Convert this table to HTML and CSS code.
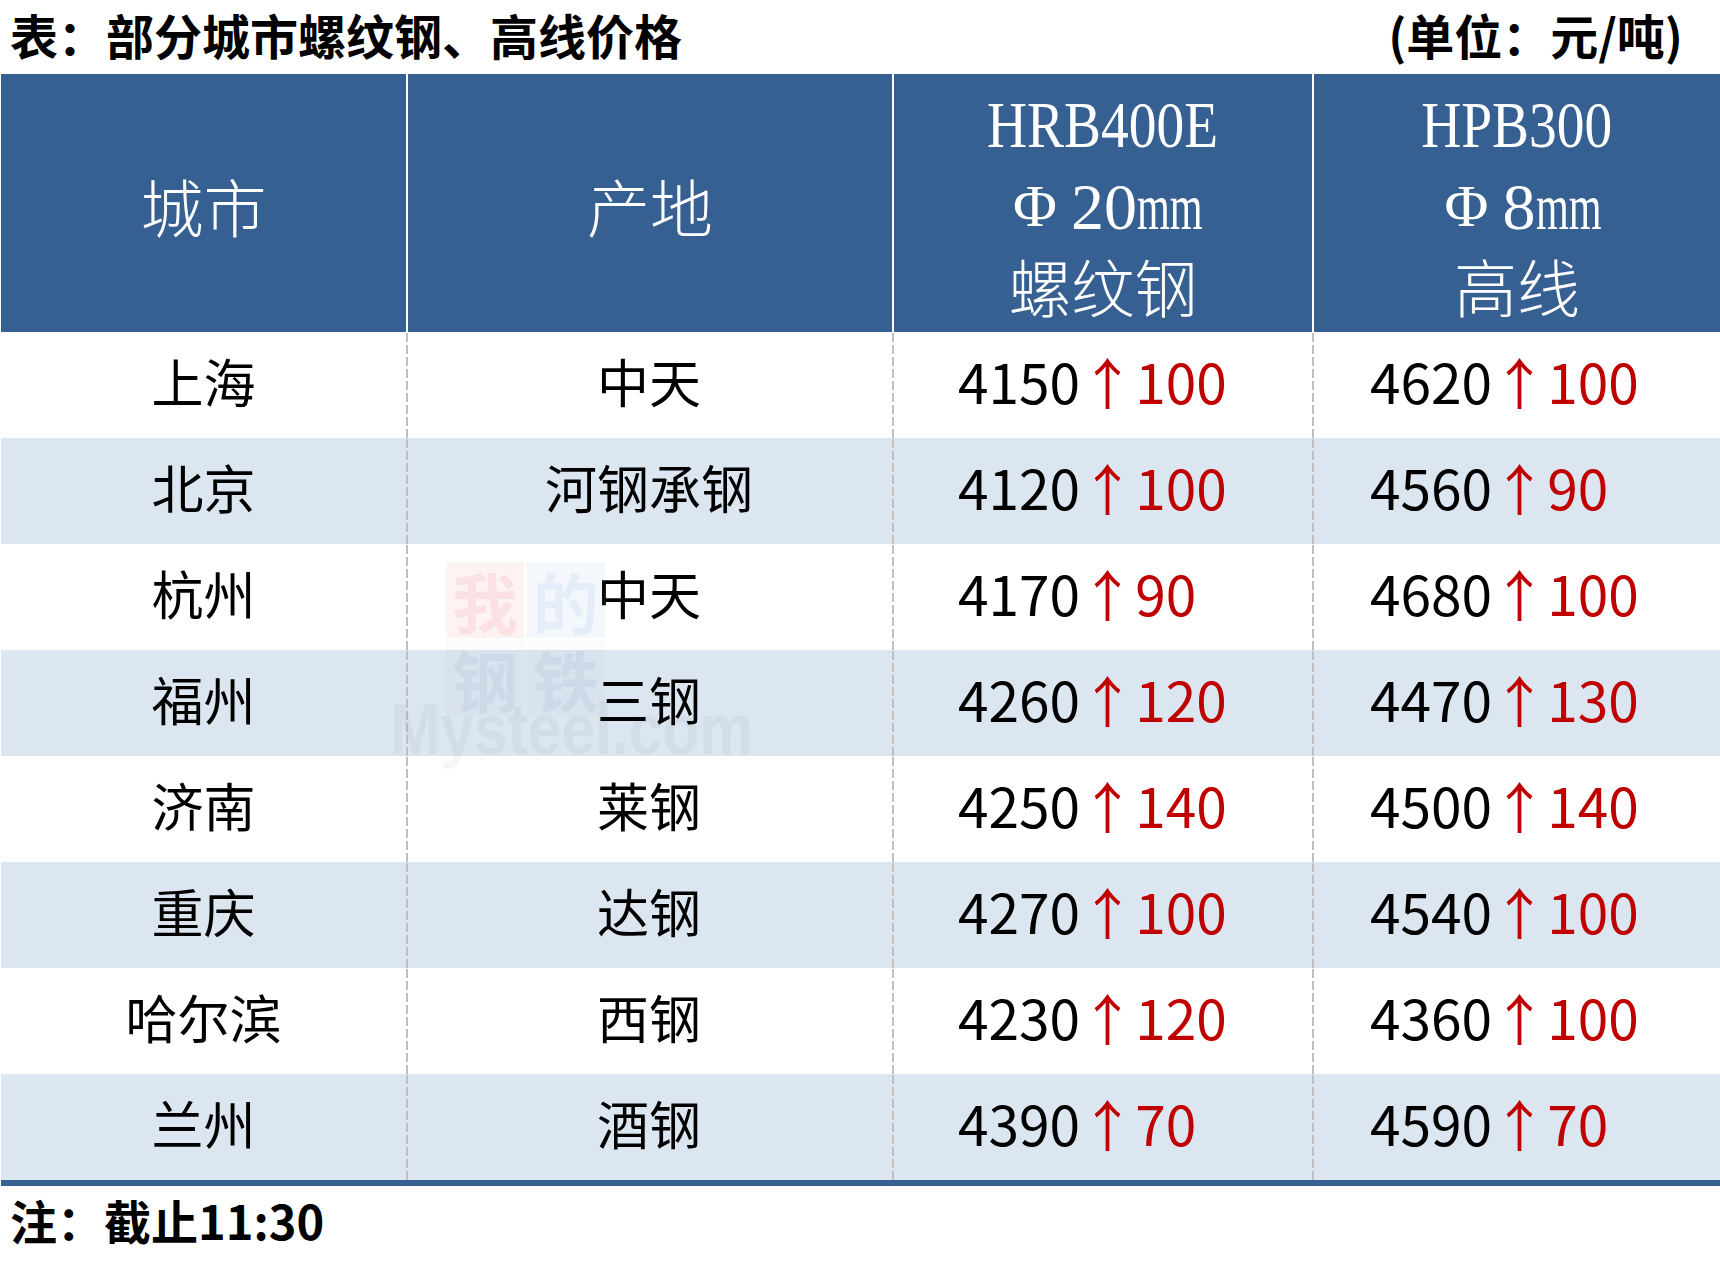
FILE: index.html
```html
<!DOCTYPE html>
<html lang="zh-CN">
<head>
<meta charset="utf-8">
<title>部分城市螺纹钢、高线价格</title>
<link rel="stylesheet" href="styles.css">
</head>
<body>
<div class="page">
  <div class="title">
    <span>表：部分城市螺纹钢、高线价格</span>
    <span>(单位：元/吨)</span>
  </div>
  <div class="table">
    <div class="row head">
      <div class="cell center"><span class="hcjk">城市</span></div>
      <div class="cell center"><span class="hcjk">产地</span></div>
      <div class="cell stack">
        <div class="hl"><span class="lat">HRB400E</span></div>
        <div class="hl spec s3"><span class="phi">Φ</span><span class="dg w2">20</span><span class="mm"><span class="mmi">mm</span></span></div>
        <div class="hl hl3"><span class="hcjk">螺纹钢</span></div>
      </div>
      <div class="cell stack">
        <div class="hl"><span class="lat">HPB300</span></div>
        <div class="hl spec s4"><span class="phi">Φ</span><span class="dg w1">8</span><span class="mm"><span class="mmi">mm</span></span></div>
        <div class="hl hl3"><span class="hcjk">高线</span></div>
      </div>
    </div>

    <div class="row body">
      <div class="cell center">上海</div>
      <div class="cell center">中天</div>
      <div class="cell num n3">4150<span class="up">↑</span><span class="chg">100</span></div>
      <div class="cell num n4">4620<span class="up">↑</span><span class="chg">100</span></div>
    </div>
    <div class="row body alt">
      <div class="cell center">北京</div>
      <div class="cell center">河钢承钢</div>
      <div class="cell num n3">4120<span class="up">↑</span><span class="chg">100</span></div>
      <div class="cell num n4">4560<span class="up">↑</span><span class="chg">90</span></div>
    </div>
    <div class="row body">
      <div class="cell center">杭州</div>
      <div class="cell center">中天</div>
      <div class="cell num n3">4170<span class="up">↑</span><span class="chg">90</span></div>
      <div class="cell num n4">4680<span class="up">↑</span><span class="chg">100</span></div>
    </div>
    <div class="row body alt">
      <div class="cell center">福州</div>
      <div class="cell center">三钢</div>
      <div class="cell num n3">4260<span class="up">↑</span><span class="chg">120</span></div>
      <div class="cell num n4">4470<span class="up">↑</span><span class="chg">130</span></div>
    </div>
    <div class="row body">
      <div class="cell center">济南</div>
      <div class="cell center">莱钢</div>
      <div class="cell num n3">4250<span class="up">↑</span><span class="chg">140</span></div>
      <div class="cell num n4">4500<span class="up">↑</span><span class="chg">140</span></div>
    </div>
    <div class="row body alt">
      <div class="cell center">重庆</div>
      <div class="cell center">达钢</div>
      <div class="cell num n3">4270<span class="up">↑</span><span class="chg">100</span></div>
      <div class="cell num n4">4540<span class="up">↑</span><span class="chg">100</span></div>
    </div>
    <div class="row body">
      <div class="cell center">哈尔滨</div>
      <div class="cell center">西钢</div>
      <div class="cell num n3">4230<span class="up">↑</span><span class="chg">120</span></div>
      <div class="cell num n4">4360<span class="up">↑</span><span class="chg">100</span></div>
    </div>
    <div class="row body alt">
      <div class="cell center">兰州</div>
      <div class="cell center">酒钢</div>
      <div class="cell num n3">4390<span class="up">↑</span><span class="chg">70</span></div>
      <div class="cell num n4">4590<span class="up">↑</span><span class="chg">70</span></div>
    </div>
  </div>
  <div class="note">注：截止11:30</div>

  <div class="watermark" aria-hidden="true">
    <div class="wm-row"><span class="wm-box wm-red">我</span><span class="wm-box wm-blue">的</span></div>
    <div class="wm-row"><span class="wm-box wm-grey">钢</span><span class="wm-box wm-grey">铁</span></div>
    <div class="wm-en"><span class="wm-en-in">Mysteel.com</span></div>
  </div>
</div>
</body>
</html>
```

FILE: styles.css
```css
* { box-sizing: border-box; }

html, body {
  margin: 0;
  padding: 0;
  background: #ffffff;
}

body {
  font-family: "Noto Sans CJK SC", "Noto Sans", sans-serif;
  color: #000000;
}

.page {
  position: relative;
  width: 1720px;
  height: 1261px;
  overflow: hidden;
}

.title {
  height: 74px;
  display: flex;
  justify-content: space-between;
  align-items: center;
  padding: 0 37px 6px 10px;
  font-size: 48px;
  font-weight: 700;
  line-height: 1;
}

.table {
  margin-left: 1px;
  border-bottom: 6px solid #376092;
}

.row {
  display: grid;
  grid-template-columns: 405px 486px 420px 408px;
  height: 106px;
}

.row.alt {
  background: #dce6f1;
}

.cell {
  display: flex;
  align-items: center;
  height: 100%;
}

.center {
  justify-content: center;
}

/* header */
.head {
  height: 258px;
  background: #376092;
  color: #ffffff;
}

.head .cell + .cell {
  border-left: 2px solid #ffffff;
}

.head .center {
  padding-top: 2px;
}

.hcjk {
  font-family: "Noto Sans CJK SC", sans-serif;
  font-weight: 300;
  font-size: 63px;
  line-height: 1;
}

.stack {
  flex-direction: column;
  justify-content: center;
  padding-top: 8px;
}

.hl {
  height: 82px;
  display: flex;
  align-items: center;
  justify-content: center;
}

.hl3 {
  padding-bottom: 10px;
}

.lat {
  display: inline-block;
  font-family: "Liberation Serif", "Times New Roman", serif;
  font-size: 66px;
  line-height: 1;
  transform: scaleX(0.84);
}

/* Φ + size line */
.spec {
  align-items: baseline;
  padding-top: 8px;
  font-family: "Liberation Serif", "Times New Roman", serif;
  font-size: 66px;
  line-height: 1;
}

.s3 { padding-left: 10px; }
.s4 { padding-left: 12px; }

.phi {
  display: inline-block;
  width: 58px;
  font-size: 60px;
  transform: translateY(-3px);
}

.dg {
  display: inline-block;
}

.w2 { width: 66px; }
.w1 { width: 33px; }

.mm {
  display: inline-block;
  width: 66px;
}

.mmi {
  display: inline-block;
  transform: scaleX(0.64);
  transform-origin: left center;
}

/* body rows */
.body {
  font-size: 52px;
  line-height: 1;
}

.body .cell {
  padding-bottom: 9px;
}

.body .cell + .cell {
  background: repeating-linear-gradient(to bottom, #c0c0c0 0 9px, transparent 9px 12px) left 1px / 2px 100% no-repeat;
}

.num {
  font-size: 55px;
  justify-content: flex-start;
}

.n3 { padding-left: 66px; }
.n4 { padding-left: 58px; }

.up {
  color: #c00000;
}

.chg {
  color: #c00000;
}

.note {
  height: 75px;
  display: flex;
  align-items: center;
  padding: 0 0 8px 10px;
  font-size: 47px;
  font-weight: 700;
  line-height: 1;
}

/* watermark overlay */
.watermark {
  position: absolute;
  left: 388px;
  top: 562px;
  width: 380px;
  pointer-events: none;
}

.wm-row {
  display: flex;
  gap: 3px;
  margin-left: 58px;
  margin-bottom: 2px;
}

.wm-box {
  width: 78px;
  height: 76px;
  display: flex;
  align-items: center;
  justify-content: center;
  font-family: "Noto Sans CJK SC", sans-serif;
  font-weight: 700;
  font-size: 66px;
  line-height: 1;
}

.wm-red {
  background: rgba(235, 90, 90, 0.07);
  color: rgba(220, 40, 40, 0.09);
}

.wm-blue {
  background: rgba(120, 170, 230, 0.08);
  color: rgba(80, 130, 200, 0.09);
}

.wm-grey {
  background: rgba(120, 150, 190, 0.04);
  color: rgba(70, 100, 150, 0.08);
}

.wm-en {
  position: absolute;
  left: 2px;
  top: 131px;
}

.wm-en-in {
  display: inline-block;
  font-family: "Liberation Sans", sans-serif;
  font-weight: 700;
  font-size: 72px;
  line-height: 1;
  color: rgba(60, 60, 60, 0.05);
  transform: scaleX(0.84);
  transform-origin: left center;
}
```
